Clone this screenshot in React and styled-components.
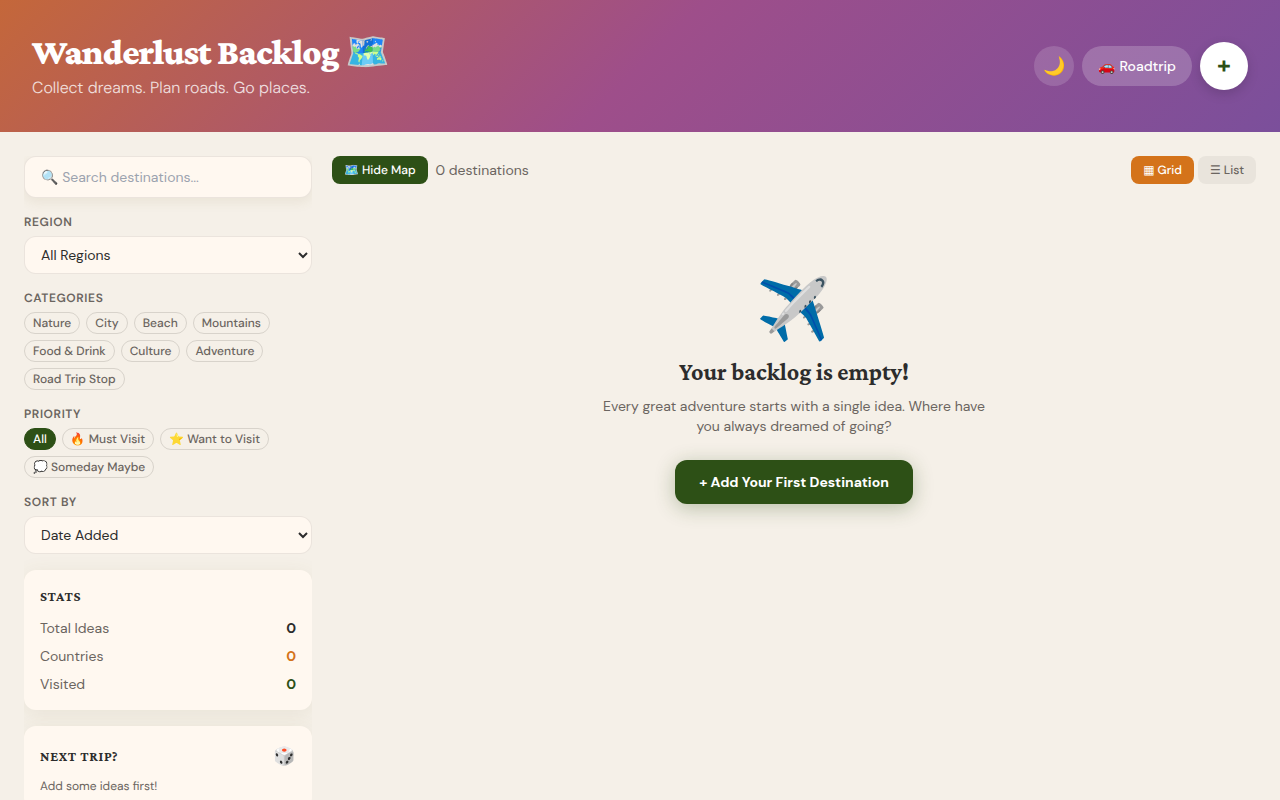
import React from "react";
import styled, { createGlobalStyle, css } from "styled-components";

const sans = `"DM Sans", Inter, "Liberation Sans", "Noto Color Emoji", sans-serif`;
const serif = `"Crimson Pro", "Liberation Serif", "Noto Color Emoji", serif`;

const GlobalStyle = createGlobalStyle`
  *, *::before, *::after { box-sizing: border-box; }
  body {
    margin: 0;
    background: #f5f0e8;
    color: #2c2c2c;
    font-family: ${sans};
    font-size: 14px;
    line-height: 20px;
    -webkit-font-smoothing: antialiased;
  }
  h1, h2, h3, p, dl, dd, fieldset { margin: 0; padding: 0; border: 0; }
  button, input, select { font-family: inherit; margin: 0; }
  button { cursor: pointer; border: 0; }
`;

const precise = css`
  text-rendering: geometricPrecision;
`;

const Page = styled.div`
  display: flex;
  flex-direction: column;
  height: 100vh;
`;

const Header = styled.header`
  display: flex;
  flex-shrink: 0;
  align-items: center;
  justify-content: space-between;
  padding: 32px;
  color: #fff;
  background: linear-gradient(135deg, #c4673a 0%, #9e4e8a 50%, #7b4f9b 100%);
`;

const Title = styled.h1`
  ${precise}
  font-family: ${serif};
  font-size: 36px;
  line-height: 40px;
  font-weight: 900;
  letter-spacing: -0.025em;
`;

const Tagline = styled.p`
  ${precise}
  margin-top: 4px;
  font-size: 16px;
  line-height: 24px;
  font-weight: 300;
  opacity: 0.8;
`;

const HeaderActions = styled.div`
  display: flex;
  align-items: center;
  gap: 8px;
`;

const GlassButton = styled.button`
  height: 40px;
  min-width: 40px;
  padding: ${(p) => (p.$round ? "0" : "0 16px")};
  border-radius: 20px;
  background: rgba(255, 255, 255, ${(p) => (p.$round ? 0.15 : 0.2)});
  color: #fff;
  font-size: ${(p) => (p.$round ? 18 : 14)}px;
  line-height: 20px;
  font-weight: 500;
`;

const AddButton = styled.button`
  ${precise}
  width: 48px;
  height: 48px;
  padding: 0;
  border-radius: 50%;
  background: #fff;
  color: #2d5016;
  font-size: 24px;
  line-height: 28px;
  font-weight: 700;
  box-shadow: 0 4px 12px rgba(0, 0, 0, 0.15);
`;

const Body = styled.div`
  display: flex;
  flex: 1;
  gap: 20px;
  min-height: 0;
  padding: 24px 24px 0;
`;

const Sidebar = styled.aside`
  display: flex;
  flex-direction: column;
  flex: 0 0 288px;
  gap: 16px;
  overflow-y: auto;
  scrollbar-width: none;
  > * { flex-shrink: 0; }
`;

const field = css`
  width: 100%;
  border: 1px solid rgba(0, 0, 0, 0.08);
  border-radius: 12px;
  background: #fff8f0;
  color: #2c2c2c;
  font-size: 14px;
  line-height: 20px;
`;

const Search = styled.input`
  ${field}
  height: 42px;
  padding: 10px 16px;
  box-shadow: 0 4px 12px rgba(139, 115, 56, 0.1);
  &::placeholder { color: #9ca3af; opacity: 1; }
`;

const Select = styled.select`
  ${field}
  display: block;
  height: 38px;
  padding: 8px 12px;
`;

const groupLabel = css`
  ${precise}
  display: block;
  margin-bottom: 6px;
  padding: 0;
  color: #6b6560;
  font-size: 12px;
  line-height: 16px;
  font-weight: 600;
  letter-spacing: 0.05em;
  text-transform: uppercase;
`;

const Label = styled.label`${groupLabel}`;
const Legend = styled.legend`${groupLabel}`;

const Chips = styled.div`
  display: flex;
  flex-wrap: wrap;
  gap: 6px;
`;

const Chip = styled.button`
  ${precise}
  height: 22px;
  padding: 0 8px;
  border: 1px solid ${(p) => (p.$active ? "#2d5016" : "#d8d3cb")};
  border-radius: 11px;
  background: ${(p) => (p.$active ? "#2d5016" : "transparent")};
  color: ${(p) => (p.$active ? "#fff" : "#6b6560")};
  font-size: 12px;
  line-height: 16px;
  font-weight: 500;
  white-space: nowrap;
`;

const Card = styled.section`
  padding: 16px;
  border-radius: 12px;
  background: #fff8f0;
  box-shadow: 0 4px 20px rgba(125, 119, 56, 0.1);
`;

const CardTitle = styled.h3`
  font-family: ${serif};
  font-size: 14px;
  line-height: 20px;
  font-weight: 700;
  letter-spacing: 0.05em;
  text-transform: uppercase;
`;

const CardHead = styled.div`
  display: flex;
  align-items: center;
  justify-content: space-between;
  height: 28px;
  margin-bottom: 8px;
`;

const Dice = styled.button`
  padding: 0;
  background: none;
  font-size: 18px;
  line-height: 28px;
`;

const Stats = styled.dl`
  display: flex;
  flex-direction: column;
  gap: 8px;
  margin-top: 12px;
`;

const Stat = styled.div`
  display: flex;
  justify-content: space-between;
  dt { color: #6b6560; }
  dd { color: ${(p) => p.$color}; font-weight: 700; }
`;

const Hint = styled.p`
  ${precise}
  color: #6b6560;
  font-size: 12px;
  line-height: 16px;
`;

const Main = styled.main`
  flex: 1;
  min-width: 0;
`;

const Toolbar = styled.div`
  display: flex;
  align-items: center;
  gap: ${(p) => p.$gap}px;
`;

const Spread = styled.div`
  display: flex;
  justify-content: space-between;
`;

const ToolButton = styled.button`
  ${precise}
  height: 28px;
  padding: 0 12px;
  border-radius: 8px;
  background: ${(p) => p.$bg};
  color: ${(p) => p.$fg || "#fff"};
  font-size: 12px;
  line-height: 16px;
  font-weight: 500;
`;

const Count = styled.span`
  color: #6b6560;
`;

const Empty = styled.section`
  display: flex;
  flex-direction: column;
  align-items: center;
  padding-top: 96px;
  text-align: center;
`;

const Plane = styled.div`
  font-size: 60px;
  line-height: 60px;
  margin-bottom: 16px;
`;

const EmptyTitle = styled.h2`
  font-family: ${serif};
  font-size: 24px;
  line-height: 32px;
  font-weight: 700;
`;

const EmptyText = styled.p`
  max-width: 384px;
  margin: 8px 0 24px;
  color: #6b6560;
`;

const Primary = styled.button`
  height: 44px;
  padding: 0 24px;
  border-radius: 12px;
  background: #2d5016;
  color: #fff;
  font-size: 14px;
  font-weight: 700;
  box-shadow: 0 4px 20px rgba(45, 80, 22, 0.3);
`;

const categories = ["Nature", "City", "Beach", "Mountains", "Food & Drink", "Culture", "Adventure", "Road Trip Stop"];
const priorities = ["All", "🔥 Must Visit", "⭐ Want to Visit", "💭 Someday Maybe"];

export default function App() {
  return (
    <Page>
      <GlobalStyle />
      <Header>
        <div>
          <Title>Wanderlust Backlog 🗺️</Title>
          <Tagline>Collect dreams. Plan roads. Go places.</Tagline>
        </div>
        <HeaderActions>
          <GlassButton $round aria-label="Toggle dark mode">🌙</GlassButton>
          <GlassButton>🚗 Roadtrip</GlassButton>
          <AddButton aria-label="Add destination">+</AddButton>
        </HeaderActions>
      </Header>
      <Body>
        <Sidebar>
          <Search type="text" aria-label="Search destinations" placeholder="🔍 Search destinations..." />
          <div>
            <Label htmlFor="region">Region</Label>
            <Select id="region"><option>All Regions</option></Select>
          </div>
          <fieldset>
            <Legend>Categories</Legend>
            <Chips>{categories.map((c) => <Chip key={c}>{c}</Chip>)}</Chips>
          </fieldset>
          <fieldset>
            <Legend>Priority</Legend>
            <Chips>{priorities.map((p, i) => <Chip key={p} $active={i === 0}>{p}</Chip>)}</Chips>
          </fieldset>
          <div>
            <Label htmlFor="sort">Sort by</Label>
            <Select id="sort"><option>Date Added</option></Select>
          </div>
          <Card>
            <CardTitle>Stats</CardTitle>
            <Stats>
              <Stat $color="#2c2c2c"><dt>Total Ideas</dt><dd>0</dd></Stat>
              <Stat $color="#d4731a"><dt>Countries</dt><dd>0</dd></Stat>
              <Stat $color="#2d5016"><dt>Visited</dt><dd>0</dd></Stat>
            </Stats>
          </Card>
          <Card>
            <CardHead>
              <CardTitle>Next Trip?</CardTitle>
              <Dice aria-label="Pick a random trip">🎲</Dice>
            </CardHead>
            <Hint>Add some ideas first!</Hint>
          </Card>
        </Sidebar>
        <Main>
          <Spread>
            <Toolbar $gap={8}>
              <ToolButton $bg="#2d5016">🗺️ Hide Map</ToolButton>
              <Count>0 destinations</Count>
            </Toolbar>
            <Toolbar $gap={4}>
              <ToolButton $bg="#d4731a">▦ Grid</ToolButton>
              <ToolButton $bg="#e9e4dc" $fg="#6b6560">☰ List</ToolButton>
            </Toolbar>
          </Spread>
          <Empty>
            <Plane>✈️</Plane>
            <EmptyTitle>Your backlog is empty!</EmptyTitle>
            <EmptyText>Every great adventure starts with a single idea. Where have you always dreamed of going?</EmptyText>
            <Primary>+ Add Your First Destination</Primary>
          </Empty>
        </Main>
      </Body>
    </Page>
  );
}
